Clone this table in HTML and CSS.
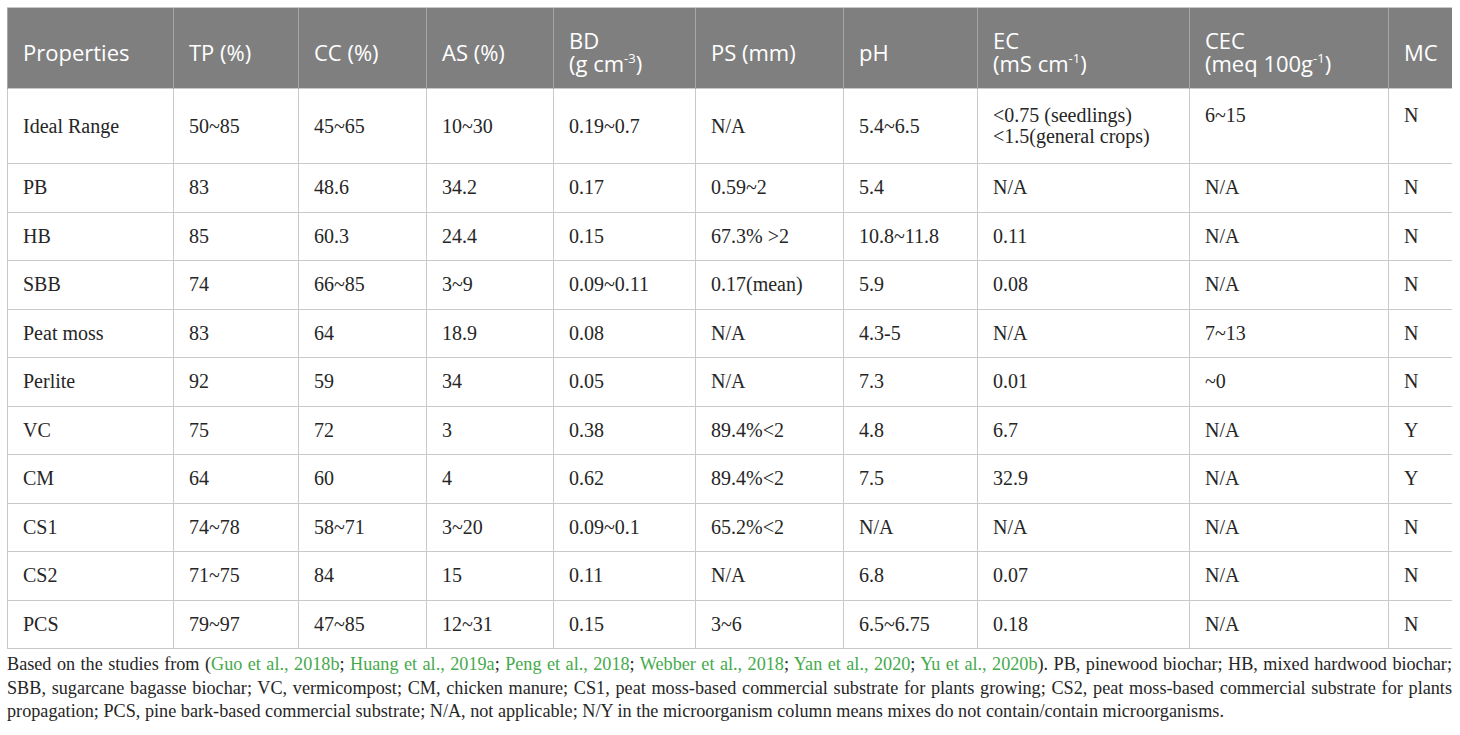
FILE: index.html
```html
<!DOCTYPE html>
<html lang="en">
<head>
    <meta charset="UTF-8">
    <title>Substrate properties</title>
    <link rel="stylesheet" href="styles.css">
</head>
<body>
    <table class="props">
        <colgroup>
            <col style="width: 166px">
            <col style="width: 125px">
            <col style="width: 128px">
            <col style="width: 127px">
            <col style="width: 142px">
            <col style="width: 148px">
            <col style="width: 134px">
            <col style="width: 212px">
            <col style="width: 199px">
            <col style="width: 64px">
        </colgroup>
        <thead>
            <tr>
                <th>Properties</th>
                <th>TP (%)</th>
                <th>CC (%)</th>
                <th>AS (%)</th>
                <th>BD<br>(g cm<sup>-3</sup>)</th>
                <th>PS (mm)</th>
                <th>pH</th>
                <th>EC<br>(mS cm<sup>-1</sup>)</th>
                <th>CEC<br>(meq 100g<sup>-1</sup>)</th>
                <th>MC</th>
            </tr>
        </thead>
        <tbody>
            <tr class="ideal">
                <td>Ideal Range</td>
                <td>50~85</td>
                <td>45~65</td>
                <td>10~30</td>
                <td>0.19~0.7</td>
                <td>N/A</td>
                <td>5.4~6.5</td>
                <td>&lt;0.75 (seedlings)<br>&lt;1.5(general crops)</td>
                <td class="top">6~15</td>
                <td class="top">N</td>
            </tr>
            <tr><td>PB</td><td>83</td><td>48.6</td><td>34.2</td><td>0.17</td><td>0.59~2</td><td>5.4</td><td>N/A</td><td>N/A</td><td>N</td></tr>
            <tr><td>HB</td><td>85</td><td>60.3</td><td>24.4</td><td>0.15</td><td>67.3% &gt;2</td><td>10.8~11.8</td><td>0.11</td><td>N/A</td><td>N</td></tr>
            <tr><td>SBB</td><td>74</td><td>66~85</td><td>3~9</td><td>0.09~0.11</td><td>0.17(mean)</td><td>5.9</td><td>0.08</td><td>N/A</td><td>N</td></tr>
            <tr><td>Peat moss</td><td>83</td><td>64</td><td>18.9</td><td>0.08</td><td>N/A</td><td>4.3-5</td><td>N/A</td><td>7~13</td><td>N</td></tr>
            <tr><td>Perlite</td><td>92</td><td>59</td><td>34</td><td>0.05</td><td>N/A</td><td>7.3</td><td>0.01</td><td>~0</td><td>N</td></tr>
            <tr><td>VC</td><td>75</td><td>72</td><td>3</td><td>0.38</td><td>89.4%&lt;2</td><td>4.8</td><td>6.7</td><td>N/A</td><td>Y</td></tr>
            <tr><td>CM</td><td>64</td><td>60</td><td>4</td><td>0.62</td><td>89.4%&lt;2</td><td>7.5</td><td>32.9</td><td>N/A</td><td>Y</td></tr>
            <tr><td>CS1</td><td>74~78</td><td>58~71</td><td>3~20</td><td>0.09~0.1</td><td>65.2%&lt;2</td><td>N/A</td><td>N/A</td><td>N/A</td><td>N</td></tr>
            <tr><td>CS2</td><td>71~75</td><td>84</td><td>15</td><td>0.11</td><td>N/A</td><td>6.8</td><td>0.07</td><td>N/A</td><td>N</td></tr>
            <tr><td>PCS</td><td>79~97</td><td>47~85</td><td>12~31</td><td>0.15</td><td>3~6</td><td>6.5~6.75</td><td>0.18</td><td>N/A</td><td>N</td></tr>
        </tbody>
    </table>
    <p class="note">Based on the studies from (<a href="#">Guo et al., 2018b</a>; <a href="#">Huang et al., 2019a</a>; <a href="#">Peng et al., 2018</a>; <a href="#">Webber et al., 2018</a>; <a href="#">Yan et al., 2020</a>; <a href="#">Yu et al., 2020b</a>). PB, pinewood biochar; HB, mixed hardwood biochar; SBB, sugarcane bagasse biochar; VC, vermicompost; CM, chicken manure; CS1, peat moss-based commercial substrate for plants growing; CS2, peat moss-based commercial substrate for plants propagation; PCS, pine bark-based commercial substrate; N/A, not applicable; N/Y in the microorganism column means mixes do not contain/contain microorganisms.</p>
</body>
</html>
```

FILE: styles.css
```css
body {
    margin: 7px 8px 0 7px;
    background-color: #fff;
    color: #262626;
    font-family: "Liberation Serif", "Times New Roman", serif;
}
.props {
    width: 1445px;
    border-collapse: collapse;
    table-layout: fixed;
    border: 1px solid #c9c9c9;
}
.props th {
    background-color: #7f7f7f;
    color: #fff;
    font-family: "Open Sans", "Liberation Sans", sans-serif;
    font-weight: normal;
    font-size: 22px;
    line-height: 23px;
    text-align: left;
    vertical-align: middle;
    padding: 21px 15px 13px;
    border-left: 1px solid #a6a6a6;
    border-top: 1px solid #c9c9c9;
}
.props th sup {
    font-size: 13px;
    vertical-align: 9px;
    line-height: 0;
}
.props td {
    font-size: 20px;
    line-height: 21px;
    padding: 13px 15px 13.5px;
    border: 1px solid #c9c9c9;
    vertical-align: middle;
}
.props .ideal td {
    padding-top: 16px;
    padding-bottom: 16px;
}
.props .ideal td.top {
    vertical-align: top;
}
.note {
    margin: 4px 0 0;
    font-size: 18.2px;
    line-height: 23.5px;
    text-align: justify;
    color: #262626;
}
.note a {
    color: #45aa4b;
    text-decoration: none;
}
```
